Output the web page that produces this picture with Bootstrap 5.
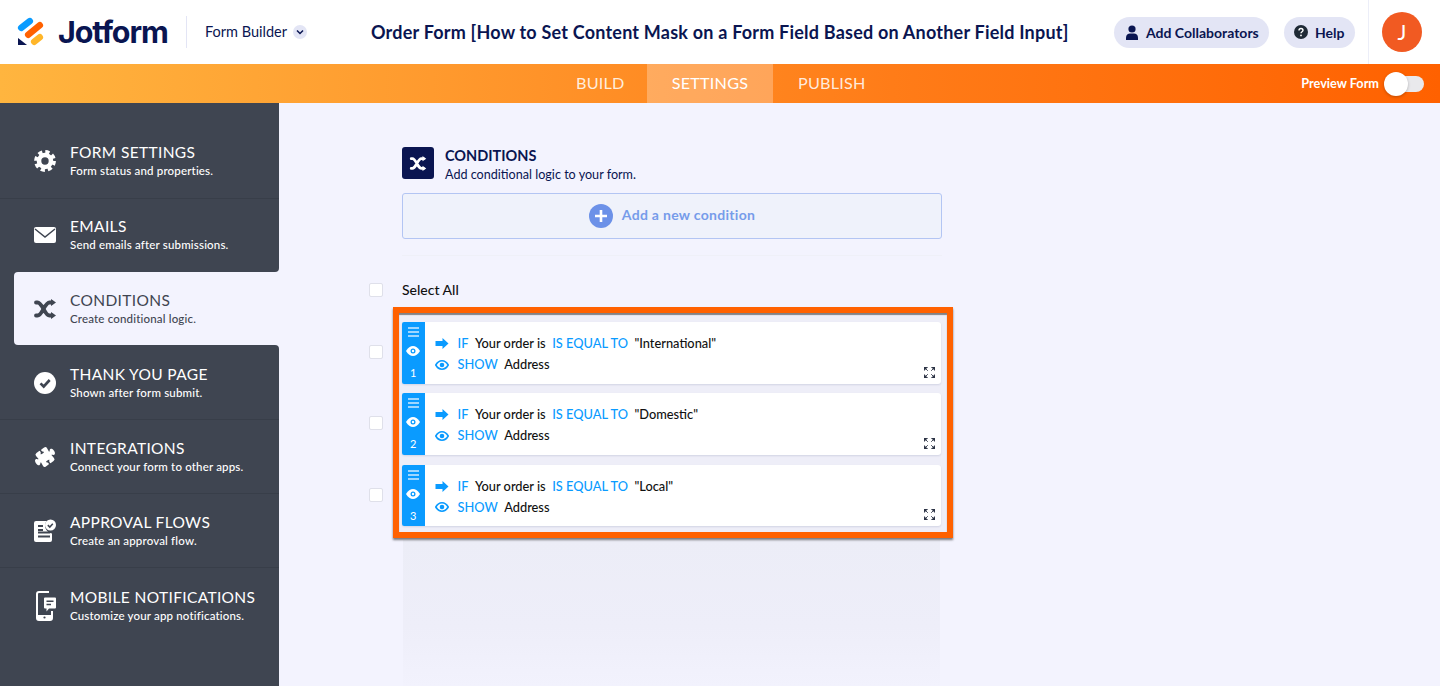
<!DOCTYPE html>
<html lang="en">
<head>
    <meta charset="UTF-8">
    <meta name="viewport" content="width=device-width, initial-scale=1.0">
    <title>Order Form - Conditions</title>
    <link rel="stylesheet" href="https://cdn.jsdelivr.net/npm/bootstrap@5.3.0/dist/css/bootstrap.min.css">
    <style>
        html, body { height: 686px; overflow: hidden; }
        body { background-color: #f3f3fe; font-family: Lato, "Liberation Sans", sans-serif; color: #0a1551; }

        .top-head { height: 64px; background: #fff; }
        .logo-mark { margin-left: 17px; width: 28px; height: 30px; flex-shrink: 0; }
        .logo-word { font-family: Inter, sans-serif; font-weight: 700; font-size: 30.5px; letter-spacing: -1.1px; margin-left: 13px; width: 128px; }
        .head-sep { width: 1px; height: 32px; background: #e3e5f5; margin-right: 18px; }
        .builder-label { font-size: 14.5px; color: #0a1551; width: 82px; white-space: nowrap; }
        .chev-dot { width: 14px; height: 14px; border-radius: 50%; background: #e3e5f5; margin-left: 6px; }
        .form-title { font-size: 18px; font-weight: 700; letter-spacing: .21px; margin-left: 64px; width: 743px; flex-shrink: 0; white-space: nowrap; }
        .pill-btn { height: 31px; border-radius: 16px; background: #e3e5f5; color: #0a1551; font-size: 14px; font-weight: 700; border: 0; white-space: nowrap; flex-shrink: 0; gap: 7px; }
        .collab-btn { width: 155px; padding: 0 0 0 11px; }
        .help-btn { width: 71px; margin-left: 15px; padding: 0 0 0 10px; }
        .avatar-wrap { width: 72px; height: 64px; border-left: 1px solid #eceef8; margin-left: 13px; padding-left: 13px; }
        .avatar-dot { width: 40px; height: 40px; border-radius: 50%; background: #f15a22; color: #fff; font-size: 21px; }

        .tab-strip { height: 39px; background: linear-gradient(90deg, #ffb53f 0%, #ff9a2e 30%, #ff7c18 62%, #ff6100 100%); }
        .tab-link { color: rgba(255, 255, 255, .85); font-size: 16.2px; letter-spacing: .2px; text-decoration: none; line-height: 37px; }
        .tab-build { margin-left: 576px; width: 71px; }
        .tab-settings { width: 126px; text-align: center; background: rgba(255, 255, 255, .27); color: #fff; }
        .tab-publish { margin-left: 25px; }
        .preview-label { color: #fff; font-size: 12.7px; font-weight: 700; }
        .toggle-track { width: 34px; height: 16px; border-radius: 8px; background: #e9e9ec; margin: 0 16px 0 11px; position: relative; }
        .toggle-knob { width: 24px; height: 24px; border-radius: 50%; background: #fff; position: absolute; left: -6px; top: -4px; box-shadow: 0 1px 3px rgba(0, 0, 0, .25); }

        .side-col { width: 279px; height: 583px; background: linear-gradient(90deg, #3f4551 270px, #f3f3fe 270px); flex-shrink: 0; }
        .side-item { height: 74px; background: #3f4551; color: #fff; border-bottom: 1px solid #383e49; padding: 1px 0 0 34px; }
        .side-first { height: 96px; padding-top: 20px; }
        .side-before { border-bottom: 0; border-bottom-right-radius: 4px; height: 73px; padding-top: 0; padding-bottom: 1px; }
        .side-active { height: 73px; margin-left: 14px; padding: 0 0 0 20px; background: #f3f3fe; color: #3f4551; border: 0; border-radius: 4px 0 0 4px; }
        .side-after { height: 75px; padding-top: 2px; border-top-right-radius: 4px; }
        .side-last { border-bottom: 0; }
        .side-fill { flex-grow: 1; background: #3f4551; }
        .side-ico { width: 22px; height: 24px; margin-right: 14px; flex-shrink: 0; }
        .side-ico-tall { width: 22px; height: 30px; }
        .side-name { font-size: 15.5px; line-height: 18px; letter-spacing: .35px; white-space: nowrap; }
        .side-desc { font-size: 11.5px; line-height: 16px; letter-spacing: .17px; margin-top: 2px; font-weight: 500; white-space: nowrap; }

        .work-col { padding: 44px 0 0 90px; width: 675px; position: relative; }
        .work-head { margin-left: 33px; }
        .head-ico { width: 32px; height: 32px; border-radius: 3px; background: #0a1551; margin-right: 11px; }
        .head-name { font-size: 14.5px; font-weight: 700; line-height: 18px; }
        .head-sub { font-size: 12.6px; line-height: 17px; margin-top: 1px; }
        .add-cond { margin: 10px 0 0 33px; height: 46px; width: 540px; background: #eff2fb; border: 1px solid #b3c5f3; border-radius: 3px; color: #769cea; font-size: 14px; font-weight: 700; letter-spacing: .3px; gap: 9px; }
        .add-text { padding-bottom: 3px; }
        .plus-dot { width: 24px; height: 24px; border-radius: 50%; background: #6c91e8; }
        .faint-rule { margin: 16px 0 0 33px; width: 540px; height: 1px; background: #eff0f8; }
        .select-row { margin-top: 25px; height: 18px; }
        .pick-box { width: 14px; height: 14px; background: #fff; border: 1px solid #dfe0ea; border-radius: 2px; display: block; }
        .select-label { margin-left: 19px; color: #111; font-size: 14px; font-weight: 500; padding-bottom: 2px; }
        .picks-col { width: 24px; padding-top: 46px; gap: 57.4px; }
        .mark-frame { margin-top: 8px; width: 560px; border: 6px solid #ff6100; background: #eeeef8; padding: 9px 6px 6px 2.5px; box-shadow: 0 2px 2px rgba(40, 40, 40, .6), inset 0 2px 1px rgba(40, 40, 40, .55); gap: 9.75px; }
        .rule-card { height: 61.5px; border-radius: 3px; background: #fff; box-shadow: 0 1px 2px rgba(10, 21, 81, .12); }
        .rule-strip { width: 23.5px; background: #0a9bff; border-radius: 2px 0 0 2px; color: #fff; font-size: 11px; padding: 5px 0 2px; }
        .rule-body { padding: 11px 0 0 9.5px; font-size: 12.8px; color: #111; line-height: 21px; font-weight: 500; }
        .rule-ico { width: 14px; margin-right: 9px; }
        .rule-kw { color: #0a9bff; font-weight: 500; }
        .rule-gap { margin-left: 6.5px; }
        .expand-ico { position: absolute; right: 6px; bottom: 6px; }
        .ghost-panel { position: absolute; left: 124px; top: 437px; width: 537px; height: 146px; background: linear-gradient(#ecedf7, #eeeef9 60%, #f2f2fd); }
    </style>
</head>
<body>
    <header class="top-head d-flex align-items-center">
        <svg class="logo-mark" viewBox="0 0 28 30">
            <path d="M4.2 10.800L12.800 4.200" stroke="#0a9bff" stroke-width="6.500" stroke-linecap="round"/>
            <path d="M11.200 17.800L22.800 8.200" stroke="#ff6100" stroke-width="6.500" stroke-linecap="round"/>
            <path d="M17.200 24.800L22.800 20.200" stroke="#ffb629" stroke-width="6.500" stroke-linecap="round"/>
            <path d="M1 21v6.400a.6.6 0 0 0 .6.6H10z" fill="#0a1551"/>
        </svg>
        <div class="logo-word">Jotform</div>
        <div class="head-sep"></div>
        <div class="builder-label">Form Builder</div>
        <div class="chev-dot d-flex align-items-center justify-content-center">
            <svg width="8" height="6" viewBox="0 0 8 6"><path d="M1 1.500l3 3 3-3" fill="none" stroke="#0a1551" stroke-width="1.500"/></svg>
        </div>
        <div class="form-title">Order Form [How to Set Content Mask on a Form Field Based on Another Field Input]</div>
        <button class="pill-btn collab-btn d-flex align-items-center">
            <svg width="14" height="15" viewBox="0 0 14 15"><circle cx="7" cy="4" r="3.600" fill="#0a1551"/><path d="M1 15v-2.500C1 10 3 8.600 5 8.600h4c2 0 4 1.400 4 3.900V15z" fill="#0a1551"/></svg>
            <span>Add Collaborators</span>
        </button>
        <button class="pill-btn help-btn d-flex align-items-center">
            <svg width="14" height="14" viewBox="0 0 14 14"><circle cx="7" cy="7" r="7" fill="#1f2a36"/><path d="M5 5.400C5 4.200 5.900 3.500 7 3.500s2 .7 2 1.800c0 1.500-2 1.400-2 3" fill="none" stroke="#fff" stroke-width="1.400"/><circle cx="7" cy="10.400" r=".9" fill="#fff"/></svg>
            <span>Help</span>
        </button>
        <div class="avatar-wrap d-flex align-items-center">
            <div class="avatar-dot d-flex align-items-center justify-content-center">J</div>
        </div>
    </header>

    <nav class="tab-strip d-flex">
        <a href="#" class="tab-link tab-build">BUILD</a>
        <a href="#" class="tab-link tab-settings">SETTINGS</a>
        <a href="#" class="tab-link tab-publish">PUBLISH</a>
        <div class="ms-auto d-flex align-items-center">
            <span class="preview-label">Preview Form</span>
            <div class="toggle-track"><div class="toggle-knob"></div></div>
        </div>
    </nav>

    <div class="d-flex">
        <aside class="side-col d-flex flex-column">
            <div class="side-item side-first d-flex align-items-center">
                <svg class="side-ico" viewBox="0 0 22 24"><circle cx="11" cy="12" r="6" fill="none" stroke="#fff" stroke-width="4.600"/><circle cx="11" cy="12" r="9.200" fill="none" stroke="#fff" stroke-width="3.400" stroke-dasharray="4.200 3.030"/></svg>
                <div><div class="side-name">FORM SETTINGS</div><div class="side-desc">Form status and properties.</div></div>
            </div>
            <div class="side-item side-before d-flex align-items-center">
                <svg class="side-ico" viewBox="0 0 22 24"><rect y="4" width="22" height="16" rx="2" fill="#fff"/><path d="M1 6l10 8 10-8" fill="none" stroke="#3f4551" stroke-width="1.500"/></svg>
                <div><div class="side-name">EMAILS</div><div class="side-desc">Send emails after submissions.</div></div>
            </div>
            <div class="side-item side-active d-flex align-items-center">
                <svg class="side-ico" viewBox="0 0 22 24"><path d="M2 5.500h1.500c5 0 7 13 12 13H18M2 18.500h1.500c5 0 7-13 12-13H18" fill="none" stroke="#3f4551" stroke-width="3.800" stroke-linecap="round"/><path d="M17 2l5 3.500-5 3.500zM17 15l5 3.500-5 3.500z" fill="#3f4551"/></svg>
                <div><div class="side-name">CONDITIONS</div><div class="side-desc">Create conditional logic.</div></div>
            </div>
            <div class="side-item side-after d-flex align-items-center">
                <svg class="side-ico" viewBox="0 0 22 24"><circle cx="11" cy="12" r="11" fill="#fff"/><path d="M6.500 12.300l3.200 3.200 6-6.500" fill="none" stroke="#3f4551" stroke-width="2.600"/></svg>
                <div><div class="side-name">THANK YOU PAGE</div><div class="side-desc">Shown after form submit.</div></div>
            </div>
            <div class="side-item d-flex align-items-center">
                <svg class="side-ico" viewBox="0 0 16 16"><path transform="rotate(-35 8 8)" fill="#fff" d="M3.112 3.645A1.5 1.5 0 0 1 4.605 2H7a.5.5 0 0 1 .5.5v.382c0 .696-.497 1.182-.872 1.469a.459.459 0 0 0-.115.118.113.113 0 0 0-.012.025L6.5 4.5v.003l.003.01c.004.01.014.028.036.053a.86.86 0 0 0 .27.194C7.09 4.9 7.51 5 8 5c.492 0 .912-.1 1.19-.24a.86.86 0 0 0 .271-.194.213.213 0 0 0 .039-.063v-.01a.112.112 0 0 0-.012-.026.459.459 0 0 0-.115-.118c-.375-.287-.872-.773-.872-1.469V2.5A.5.5 0 0 1 9 2h2.395a1.5 1.5 0 0 1 1.493 1.645L12.645 6.5h.237c.195 0 .42-.147.675-.48.21-.274.528-.52.943-.52.568 0 .947.447 1.154.862C15.877 6.807 16 7.387 16 8s-.123 1.193-.346 1.638c-.207.415-.586.862-1.154.862-.415 0-.733-.246-.943-.52-.255-.333-.48-.48-.675-.48h-.237l.243 2.855A1.5 1.5 0 0 1 11.395 14H9a.5.5 0 0 1-.5-.5v-.382c0-.696.497-1.182.872-1.469a.459.459 0 0 0 .115-.118.113.113 0 0 0 .012-.025L9.5 11.5v-.003a.214.214 0 0 0-.039-.064.859.859 0 0 0-.27-.193C8.91 11.1 8.49 11 8 11c-.491 0-.912.1-1.19.24a.859.859 0 0 0-.271.194.214.214 0 0 0-.039.063v.003l.001.006a.113.113 0 0 0 .012.025c.016.027.05.068.115.118.375.287.872.773.872 1.469v.382a.5.5 0 0 1-.5.5H4.605a1.5 1.5 0 0 1-1.493-1.645L3.356 9.5h-.238c-.195 0-.42.147-.675.48-.21.274-.528.52-.943.52-.568 0-.947-.447-1.154-.862C.123 9.193 0 8.613 0 8s.123-1.193.346-1.638C.553 5.947.932 5.5 1.5 5.5c.415 0 .733.246.943.52.255.333.48.48.675.48h.238l-.244-2.855z"/></svg>
                <div><div class="side-name">INTEGRATIONS</div><div class="side-desc">Connect your form to other apps.</div></div>
            </div>
            <div class="side-item d-flex align-items-center">
                <svg class="side-ico" viewBox="0 0 22 24"><path d="M2 2h10.500a8 8 0 0 0 5.500 12.500V21a2 2 0 0 1-2 2H2a2 2 0 0 1-2-2V4a2 2 0 0 1 2-2z" fill="#fff"/><path d="M4 7h5M4 11h5M4 13.500h12M4 17.500h12" stroke="#3f4551" stroke-width="1.800"/><circle cx="16.500" cy="6" r="5.500" fill="#fff"/><path d="M13.800 6.100l2 2 3-3.400" fill="none" stroke="#3f4551" stroke-width="1.500"/></svg>
                <div><div class="side-name">APPROVAL FLOWS</div><div class="side-desc">Create an approval flow.</div></div>
            </div>
            <div class="side-item side-last d-flex align-items-center">
                <svg class="side-ico side-ico-tall" viewBox="0 0 22 30"><path d="M15 1H5a2 2 0 0 0-2 2v24a2 2 0 0 0 2 2h11a2 2 0 0 0 2-2v-7" fill="none" stroke="#fff" stroke-width="2"/><path d="M3 24h15v5H3z" fill="#fff"/><circle cx="10.500" cy="26.500" r="1.100" fill="#3f4551"/><path d="M10 7.500a1 1 0 0 1 1-1h10a1 1 0 0 1 1 1v9a1 1 0 0 1-1 1h-6l-2.500 3v-3H11a1 1 0 0 1-1-1z" fill="#fff"/><path d="M12.500 10.300h7M12.500 13.500h4.500" stroke="#3f4551" stroke-width="1.600"/></svg>
                <div><div class="side-name">MOBILE NOTIFICATIONS</div><div class="side-desc">Customize your app notifications.</div></div>
            </div>
            <div class="side-fill"></div>
        </aside>

        <main class="work-col">
            <div class="ghost-panel"></div>
            <div class="work-head d-flex">
                <div class="head-ico d-flex align-items-center justify-content-center">
                    <svg width="18" height="15" viewBox="0 2 22 20"><path d="M2 5.500h1.500c5 0 7 13 12 13H18M2 18.500h1.500c5 0 7-13 12-13H18" fill="none" stroke="#fff" stroke-width="3.800" stroke-linecap="round"/><path d="M17 2l5 3.500-5 3.500zM17 15l5 3.500-5 3.500z" fill="#fff"/></svg>
                </div>
                <div>
                    <div class="head-name">CONDITIONS</div>
                    <div class="head-sub">Add conditional logic to your form.</div>
                </div>
            </div>
            <div class="add-cond d-flex align-items-center justify-content-center">
                <div class="plus-dot d-flex align-items-center justify-content-center">
                    <svg width="12" height="12" viewBox="0 0 12 12"><path d="M6 0v12M0 6h12" stroke="#fff" stroke-width="2.600"/></svg>
                </div>
                <span class="add-text">Add a new condition</span>
            </div>
            <div class="faint-rule"></div>
            <div class="select-row d-flex align-items-center">
                <span class="pick-box"></span>
                <span class="select-label">Select All</span>
            </div>
            <div class="d-flex position-relative">
                <div class="picks-col d-flex flex-column">
                    <span class="pick-box"></span>
                    <span class="pick-box"></span>
                    <span class="pick-box"></span>
                </div>
                <div class="mark-frame d-flex flex-column">
                    <div class="rule-card d-flex position-relative">
                        <div class="rule-strip d-flex flex-column align-items-center justify-content-between">
                            <svg width="11" height="10" viewBox="0 0 11 10"><path d="M0 1h11M0 5h11M0 9h11" stroke="#cfeaff" stroke-width="1.300"/></svg>
                            <svg width="14" height="10" viewBox="0 0 14 10"><path d="M0 5c2-3.500 4.500-5 7-5s5 1.500 7 5c-2 3.500-4.500 5-7 5S2 8.500 0 5z" fill="#fff"/><circle cx="7" cy="5" r="2.500" fill="#0a9bff"/><circle cx="7" cy="5" r="1.200" fill="#fff"/></svg>
                            <span>1</span>
                        </div>
                        <div class="rule-body">
                            <div class="d-flex align-items-center"><svg class="rule-ico" height="11" viewBox="0 0 13 11"><path d="M0 3h7V0l6 5.500L7 11V8H0z" fill="#0a9bff"/></svg><span class="rule-kw">IF</span><span class="rule-gap">Your order is</span><span class="rule-kw rule-gap">IS EQUAL TO</span><span class="rule-gap">"International"</span></div>
                            <div class="d-flex align-items-center"><svg class="rule-ico" height="10" viewBox="0 0 14 10"><path d="M.8 5C2.500 2 4.700.8 7 .8S11.500 2 13.200 5C11.500 8 9.300 9.200 7 9.200S2.500 8 .8 5z" fill="none" stroke="#0a9bff" stroke-width="1.600"/><circle cx="7" cy="5" r="2.300" fill="#0a9bff"/></svg><span class="rule-kw">SHOW</span><span class="rule-gap">Address</span></div>
                        </div>
                        <svg class="expand-ico" width="11" height="11" viewBox="0 0 11 11"><path d="M0 0h3.500L0 3.500zM11 0v3.500L7.500 0zM0 11V7.500L3.500 11zM11 11H7.500L11 7.500zM1 1l2.800 2.800M10 1L7.200 3.800M1 10l2.800-2.800M10 10L7.200 7.200" fill="#2c3345" stroke="#2c3345" stroke-width=".9"/></svg>
                    </div>
                    <div class="rule-card d-flex position-relative">
                        <div class="rule-strip d-flex flex-column align-items-center justify-content-between">
                            <svg width="11" height="10" viewBox="0 0 11 10"><path d="M0 1h11M0 5h11M0 9h11" stroke="#cfeaff" stroke-width="1.300"/></svg>
                            <svg width="14" height="10" viewBox="0 0 14 10"><path d="M0 5c2-3.500 4.500-5 7-5s5 1.500 7 5c-2 3.500-4.500 5-7 5S2 8.500 0 5z" fill="#fff"/><circle cx="7" cy="5" r="2.500" fill="#0a9bff"/><circle cx="7" cy="5" r="1.200" fill="#fff"/></svg>
                            <span>2</span>
                        </div>
                        <div class="rule-body">
                            <div class="d-flex align-items-center"><svg class="rule-ico" height="11" viewBox="0 0 13 11"><path d="M0 3h7V0l6 5.500L7 11V8H0z" fill="#0a9bff"/></svg><span class="rule-kw">IF</span><span class="rule-gap">Your order is</span><span class="rule-kw rule-gap">IS EQUAL TO</span><span class="rule-gap">"Domestic"</span></div>
                            <div class="d-flex align-items-center"><svg class="rule-ico" height="10" viewBox="0 0 14 10"><path d="M.8 5C2.500 2 4.700.8 7 .8S11.500 2 13.200 5C11.500 8 9.300 9.200 7 9.200S2.500 8 .8 5z" fill="none" stroke="#0a9bff" stroke-width="1.600"/><circle cx="7" cy="5" r="2.300" fill="#0a9bff"/></svg><span class="rule-kw">SHOW</span><span class="rule-gap">Address</span></div>
                        </div>
                        <svg class="expand-ico" width="11" height="11" viewBox="0 0 11 11"><path d="M0 0h3.500L0 3.500zM11 0v3.500L7.500 0zM0 11V7.500L3.500 11zM11 11H7.500L11 7.500zM1 1l2.800 2.800M10 1L7.200 3.800M1 10l2.800-2.800M10 10L7.200 7.200" fill="#2c3345" stroke="#2c3345" stroke-width=".9"/></svg>
                    </div>
                    <div class="rule-card d-flex position-relative">
                        <div class="rule-strip d-flex flex-column align-items-center justify-content-between">
                            <svg width="11" height="10" viewBox="0 0 11 10"><path d="M0 1h11M0 5h11M0 9h11" stroke="#cfeaff" stroke-width="1.300"/></svg>
                            <svg width="14" height="10" viewBox="0 0 14 10"><path d="M0 5c2-3.500 4.500-5 7-5s5 1.500 7 5c-2 3.500-4.500 5-7 5S2 8.500 0 5z" fill="#fff"/><circle cx="7" cy="5" r="2.500" fill="#0a9bff"/><circle cx="7" cy="5" r="1.200" fill="#fff"/></svg>
                            <span>3</span>
                        </div>
                        <div class="rule-body">
                            <div class="d-flex align-items-center"><svg class="rule-ico" height="11" viewBox="0 0 13 11"><path d="M0 3h7V0l6 5.500L7 11V8H0z" fill="#0a9bff"/></svg><span class="rule-kw">IF</span><span class="rule-gap">Your order is</span><span class="rule-kw rule-gap">IS EQUAL TO</span><span class="rule-gap">"Local"</span></div>
                            <div class="d-flex align-items-center"><svg class="rule-ico" height="10" viewBox="0 0 14 10"><path d="M.8 5C2.500 2 4.700.8 7 .8S11.500 2 13.200 5C11.500 8 9.300 9.200 7 9.200S2.500 8 .8 5z" fill="none" stroke="#0a9bff" stroke-width="1.600"/><circle cx="7" cy="5" r="2.300" fill="#0a9bff"/></svg><span class="rule-kw">SHOW</span><span class="rule-gap">Address</span></div>
                        </div>
                        <svg class="expand-ico" width="11" height="11" viewBox="0 0 11 11"><path d="M0 0h3.500L0 3.500zM11 0v3.500L7.500 0zM0 11V7.500L3.500 11zM11 11H7.500L11 7.500zM1 1l2.800 2.800M10 1L7.200 3.800M1 10l2.800-2.800M10 10L7.200 7.200" fill="#2c3345" stroke="#2c3345" stroke-width=".9"/></svg>
                    </div>
                </div>
            </div>
        </main>
    </div>
    <script src="https://cdn.jsdelivr.net/npm/bootstrap@5.3.0/dist/js/bootstrap.bundle.min.js"></script>
</body>
</html>
